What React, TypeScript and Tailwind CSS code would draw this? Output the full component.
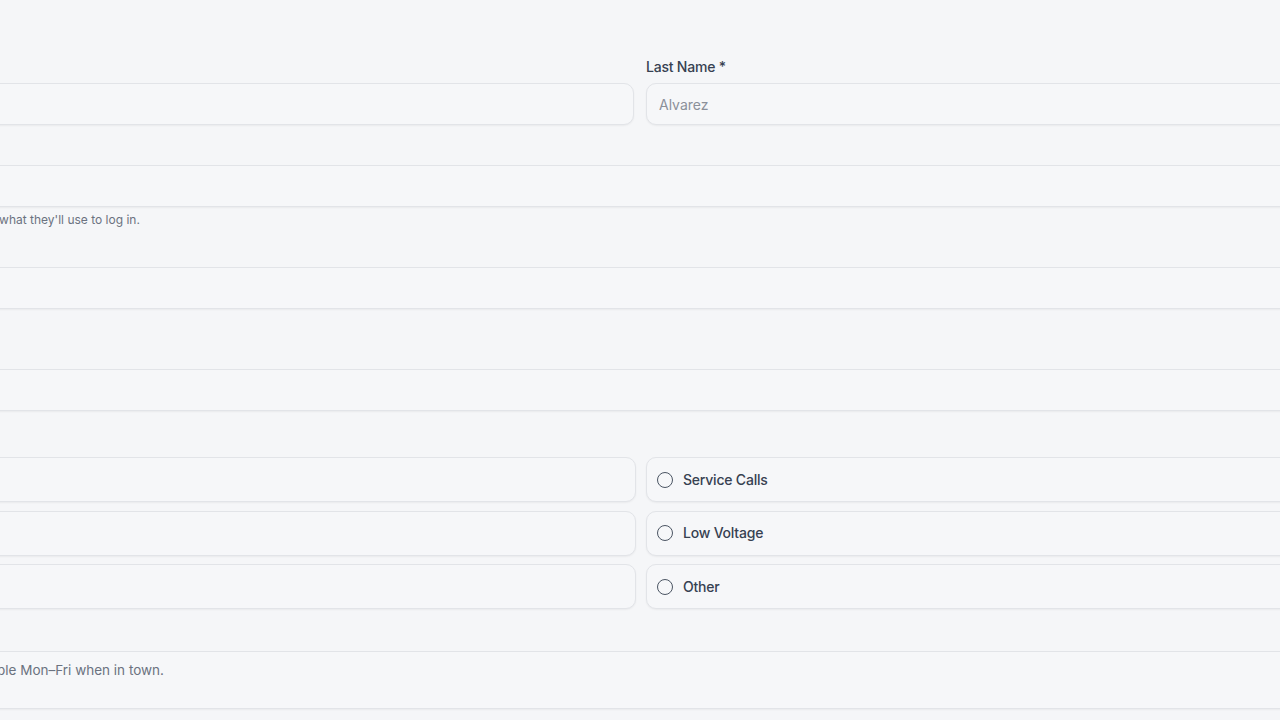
import React from "react"

const box =
  "w-full rounded-[10px] border border-[#e2e4e8] bg-[#f6f7f9] px-3 text-sm shadow-[0_1px_2px_rgba(0,0,0,0.05)] outline-none placeholder:text-[#8b9099]"

const labelCls = "mb-[7px] block h-5 pt-px text-sm font-medium leading-5 tracking-[-0.015em] text-[#374151]"

function Field({ label, placeholder, className = "" }: { label: string; placeholder?: string; className?: string }) {
  return (
    <div className={className}>
      <label className={labelCls}>{label}</label>
      <input readOnly className={`${box} h-[42px] text-[#374151]`} placeholder={placeholder} />
    </div>
  )
}

function Option({ label }: { label: string }) {
  return (
    <label className="flex h-[45px] items-center gap-2.5 rounded-[10px] border border-[#e2e4e8] bg-[#f6f7f9] px-2.5 shadow-[0_1px_2px_rgba(0,0,0,0.05)]">
      <span className="h-4 w-4 shrink-0 rounded-full border-[1.5px] border-[#4b5563]" />
      <span className="text-sm font-medium tracking-[-0.015em] text-[#374151]">{label}</span>
    </label>
  )
}

export default function App() {
  return (
    <div className="h-[720px] w-full overflow-hidden bg-[#f5f6f8] font-['Inter',sans-serif]">
      <div className="ml-[-300px] w-[1880px] pt-[56px]">
        {/* Name */}
        <div className="grid grid-cols-2 gap-3">
          <Field label="First Name *" placeholder="Maria" />
          <Field label="Last Name *" placeholder="Alvarez" />
        </div>

        {/* Email */}
        <div className="mt-[13px]">
          <label className={labelCls}>Email *</label>
          <input readOnly className={`${box} h-[42px] text-[#374151]`} />
          <p className="mt-[5px] h-4 pl-[3px] text-xs leading-4 text-[#6b7280]">
            Invitation emails will go to this address, and it's also what they'll use to log in.
          </p>
        </div>

        {/* Phone */}
        <div className="mt-3">
          <label className={labelCls}>Phone</label>
          <input readOnly className={`${box} h-[42px] text-[#374151]`} />
          <p className="mt-1 h-4 text-xs leading-4 text-[#6b7280]">Optional.</p>
        </div>

        {/* Home base */}
        <Field label="Home Base" className="mt-[13px]" />

        {/* Work types */}
        <div className="mt-[19px]">
          <label className={labelCls}>Work Types</label>
          <div className="grid grid-cols-[936px_1fr] gap-x-2.5 gap-y-[8.5px]">
            <Option label="New Construction" />
            <Option label="Service Calls" />
            <Option label="Remodel" />
            <Option label="Low Voltage" />
            <Option label="Commercial" />
            <Option label="Other" />
          </div>
        </div>

        {/* Notes */}
        <div className="mt-[15px]">
          <label className={labelCls}>Notes</label>
          <div className={`${box} h-[58px] pt-2 pb-2.5 pl-4 text-[13.5px] leading-5 text-[#6b7280]`}>
            Based out of the Miami office, usually available Mon–Fri when in town.
          </div>
        </div>
      </div>
    </div>
  )
}
